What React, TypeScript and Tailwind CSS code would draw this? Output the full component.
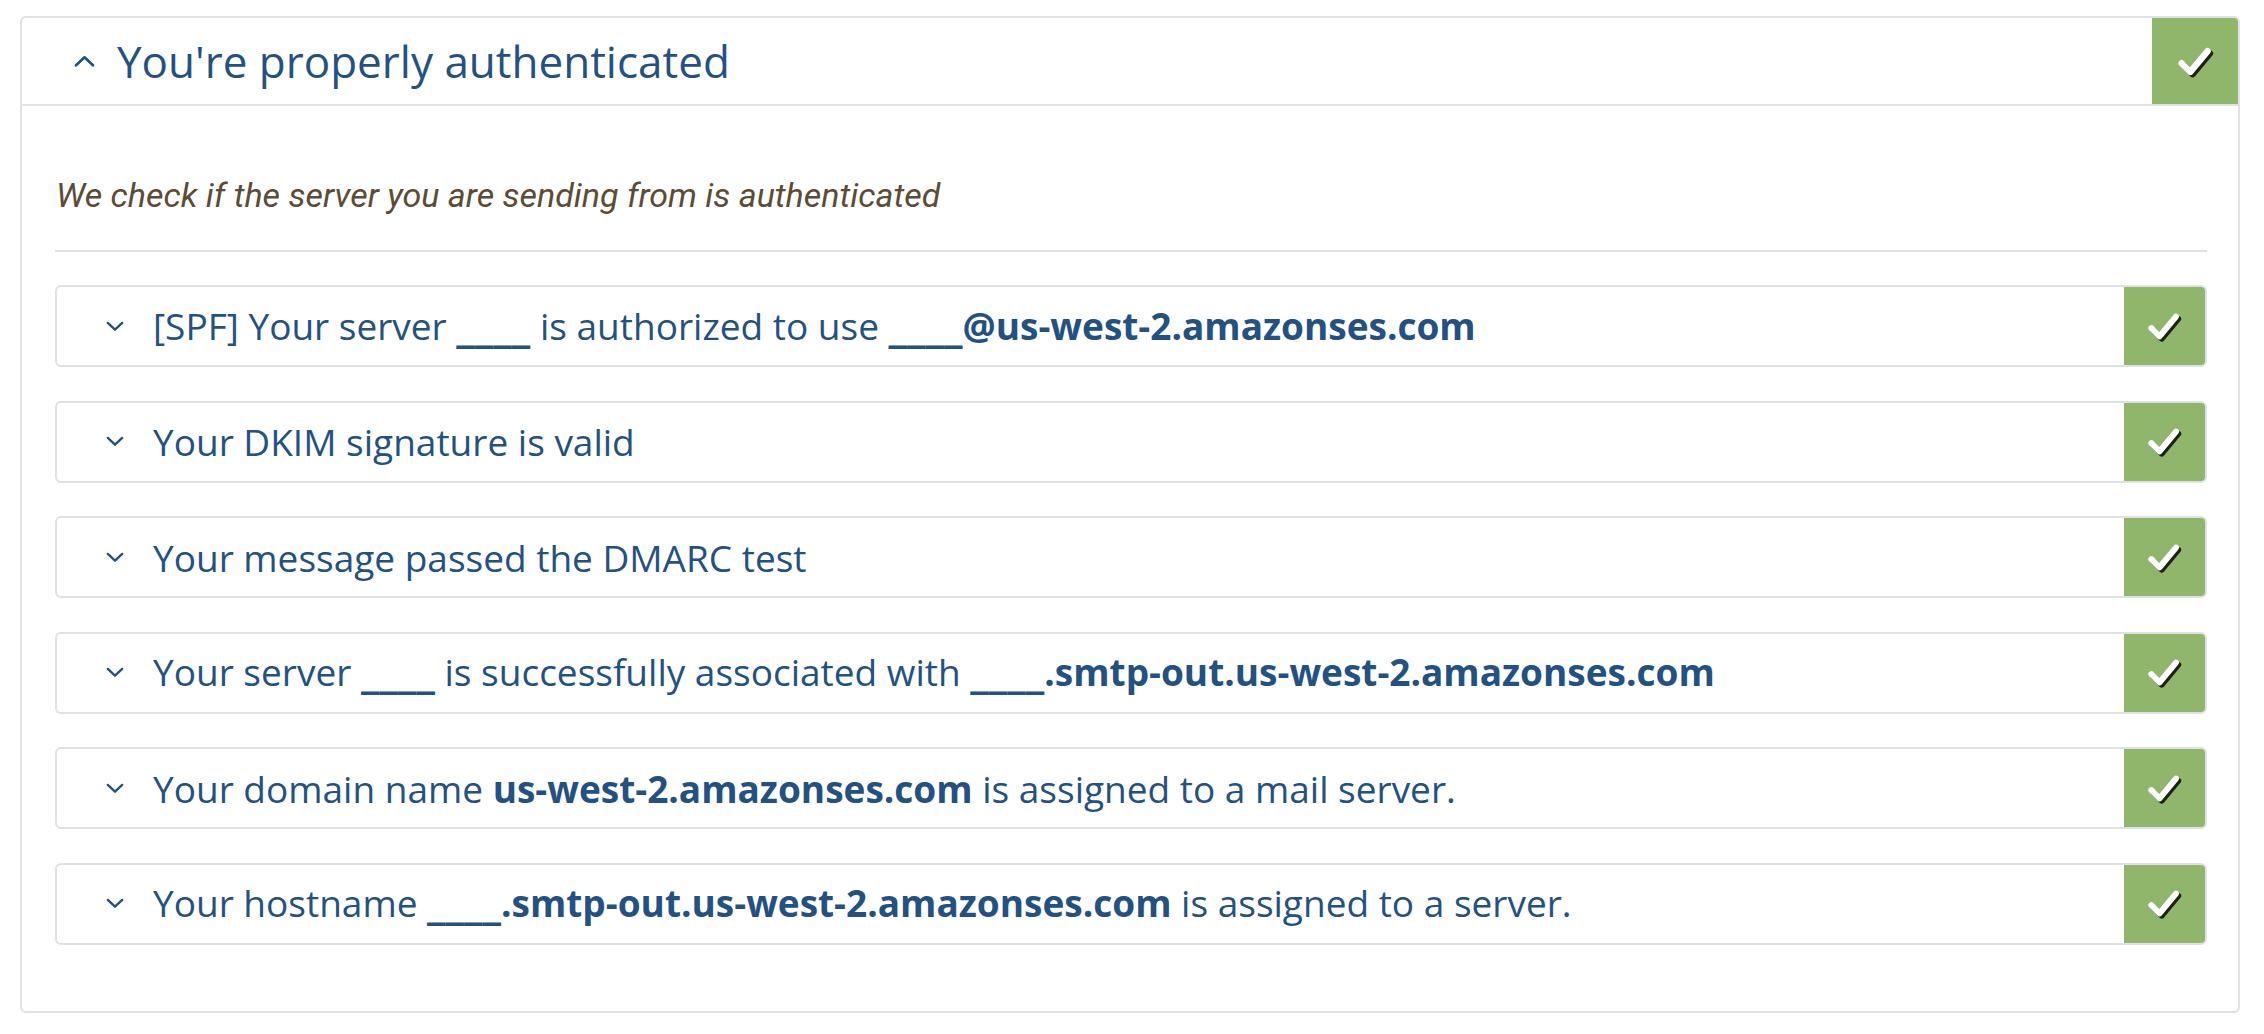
import React from "react"

const BLUE = "#235282"
const GREEN = "#8fb66a"

type Check = {
  id: string
  parts: { text: string; bold?: boolean }[]
}

const checks: Check[] = [
  {
    id: "spf",
    parts: [
      { text: "[SPF] Your server " },
      { text: "____", bold: true },
      { text: " is authorized to use " },
      { text: "____@us-west-2.amazonses.com", bold: true },
    ],
  },
  { id: "dkim", parts: [{ text: "Your DKIM signature is valid" }] },
  { id: "dmarc", parts: [{ text: "Your message passed the DMARC test" }] },
  {
    id: "rdns",
    parts: [
      { text: "Your server " },
      { text: "____", bold: true },
      { text: " is successfully associated with " },
      { text: "____.smtp-out.us-west-2.amazonses.com", bold: true },
    ],
  },
  {
    id: "mx",
    parts: [
      { text: "Your domain name " },
      { text: "us-west-2.amazonses.com", bold: true },
      { text: " is assigned to a mail server." },
    ],
  },
  {
    id: "a",
    parts: [
      { text: "Your hostname " },
      { text: "____.smtp-out.us-west-2.amazonses.com", bold: true },
      { text: " is assigned to a server." },
    ],
  },
]

function CheckMark({ size }: { size: number }) {
  return (
    <svg width={size} height={size} viewBox="0 0 32 32" fill="none">
      {/* shadow */}
      <polyline
        points="6,19.5 13.5,27 28.5,9"
        stroke="#111"
        strokeWidth="5.5"
        strokeLinecap="round"
        strokeLinejoin="round"
        opacity="0.9"
      />
      <polyline
        points="4,17.5 11.5,25 26.5,7"
        stroke="#ffffff"
        strokeWidth="5.5"
        strokeLinecap="round"
        strokeLinejoin="round"
      />
    </svg>
  )
}

function Chevron({ up, w, h }: { up?: boolean; w: number; h: number }) {
  return (
    <svg width={w} height={h} viewBox="0 0 20 11" fill="none">
      <polyline
        points={up ? "2,9.5 10,2 18,9.5" : "2,1.5 10,9 18,1.5"}
        stroke={BLUE}
        strokeWidth="2.6"
        strokeLinecap="round"
        strokeLinejoin="round"
      />
    </svg>
  )
}

// blanks ("____") get DejaVu's wide underscore so they join up like the original
function Part({ text, bold }: { text: string; bold?: boolean }) {
  const pieces = text.split(/(_+)/).filter(Boolean)
  return (
    <span className={bold ? "font-bold" : ""}>
      {pieces.map((s, i) =>
        s.startsWith("_") ? (
          <span key={i} className="font-['DejaVu_Sans',sans-serif]">
            {s}
          </span>
        ) : (
          <span key={i}>{s}</span>
        )
      )}
    </span>
  )
}

function CheckRow({ check }: { check: Check }) {
  return (
    <div className="flex h-[82px] items-stretch overflow-hidden rounded-[6px] border-2 border-[#dee2e6] bg-white">
      <div className="flex flex-1 items-center pl-[49px]">
        <Chevron w={18} h={11} />
        <span className="ml-[29px] text-[37px] leading-none" style={{ color: BLUE }}>
          {check.parts.map((p, i) => (
            <Part key={i} text={p.text} bold={p.bold} />
          ))}
        </span>
      </div>
      <div
        className="flex w-[81px] items-center justify-center"
        style={{ backgroundColor: GREEN }}
      >
        <CheckMark size={35} />
      </div>
    </div>
  )
}

export default function App() {
  return (
    <div className="min-h-screen bg-white pl-[20px] pt-[16px] font-['Open_Sans',sans-serif]">
      <div className="w-[2220px] overflow-hidden rounded-[6px] border-2 border-[#dee2e6] bg-white">
        {/* Header */}
        <div className="flex h-[88px] items-stretch border-b-2 border-[#dee2e6]">
          <div className="flex flex-1 items-center pl-[52px]">
            <Chevron up w={21} h={12} />
            <h2 className="ml-[22px] text-[44px] leading-none font-normal" style={{ color: BLUE }}>
              You're properly authenticated
            </h2>
          </div>
          <div
            className="flex w-[86px] items-center justify-center"
            style={{ backgroundColor: GREEN }}
          >
            <CheckMark size={37} />
          </div>
        </div>

        {/* Body */}
        <div className="pl-[33px] pr-[31px] pb-[66px] pt-[72px]">
          <p className="pl-px font-['Roboto',sans-serif] text-[34px] leading-[34px] italic text-[#5c4c36]">
            We check if the server you are sending from is authenticated
          </p>
          <div className="mt-[38px] h-[2px] bg-[#dee2e6]" />
          <div className="mt-[33px] flex flex-col gap-[33.5px]">
            {checks.map((c) => (
              <CheckRow key={c.id} check={c} />
            ))}
          </div>
        </div>
      </div>
    </div>
  )
}
